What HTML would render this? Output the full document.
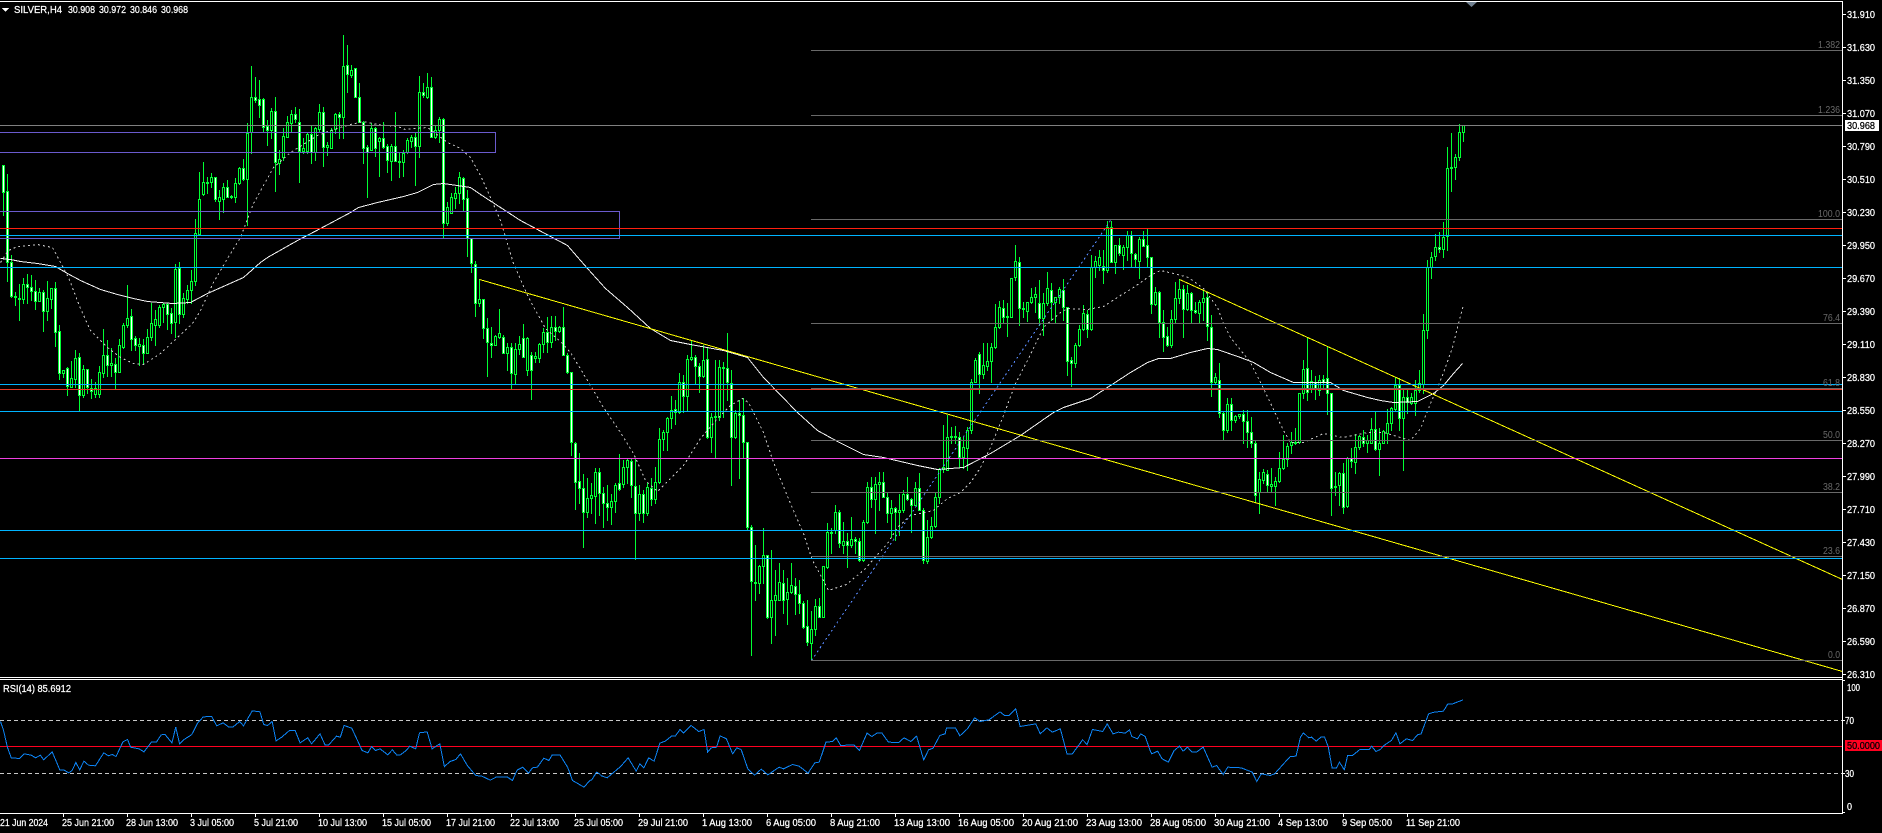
<!DOCTYPE html>
<html><head><meta charset="utf-8"><title>SILVER,H4</title>
<style>
html,body{margin:0;padding:0;background:#000;width:1882px;height:833px;overflow:hidden}
svg{display:block;position:absolute;left:0;top:0}
text{font-family:"Liberation Sans",sans-serif;font-size:10px;fill:#fff;stroke:#fff;stroke-width:.25}
.f{fill:#696969;stroke:none}
.k{fill:#000;stroke:#000}
</style></head><body>
<svg id="c" width="1882" height="833" viewBox="0 0 1882 833" xmlns="http://www.w3.org/2000/svg">
<rect width="1882" height="833" fill="#000"/>
<g id="candles" shape-rendering="crispEdges"></g>
<g shape-rendering="crispEdges" fill="none" stroke-width="1">
<g transform="translate(.5 .5)">
<!-- slow MA -->
<polyline stroke="#f4f4f4" points="0,258 10,259 20,261 37,263 55,266 67,273 80,280 100,289 117,294 133,298 147,301 172,303 190,302 207,293 243,277 260,262 267,257 297,240 320,228 350,212 358,207 377,202 403,196 417,192 433,184 443,183 470,187 480,194 500,207 520,220 567,245 587,268 605,288 627,307 650,328 670,340 690,344 723,350 747,357 763,377 797,412 817,430 837,441 863,454 883,457 917,465 937,469 963,467 990,453 1020,435 1053,412 1063,407 1090,398 1110,385 1130,372 1147,362 1158,358 1170,358 1190,352 1207,348 1217,349 1240,357 1253,362 1270,372 1293,382 1330,382 1343,390 1367,397 1380,400 1393,402 1417,401 1433,393 1443,385 1453,373 1462,363"/>
<!-- fast MA -->
<polyline stroke="#c8c8c8" stroke-dasharray="2 3" points="0,262 8,250 17,246 37,244 52,247 60,262 68,277 80,308 90,330 107,347 120,357 133,363 143,364 160,353 177,337 192,323 200,310 213,282 227,258 240,237 253,203 273,167 290,152 317,135 333,129 350,124 363,121 377,124 397,126 405,129 427,127 447,142 460,148 470,157 480,175 490,197 500,220 513,263 528,297 545,328 560,341 570,352 587,380 603,407 620,432 633,453 645,480 657,491 670,478 683,465 700,438 717,418 730,405 742,398 748,402 763,432 773,462 790,503 803,533 812,560 823,580 828,590 846,584 853,578 863,570 887,543 897,527 910,515 933,510 947,498 960,492 970,482 980,467 990,447 1003,415 1015,383 1027,360 1043,327 1060,312 1067,308 1087,309 1103,306 1120,295 1133,287 1150,275 1160,270 1173,273 1188,277 1203,288 1217,307 1223,323 1230,337 1250,362 1263,388 1283,430 1290,442 1303,442 1323,433 1342,437 1367,432 1383,432 1403,438 1410,440 1420,428 1430,403 1438,385 1443,372 1452,347 1458,323 1463,304"/>
<!-- trend -->
<line x1="479" y1="279" x2="1842" y2="671" stroke="#ffff00"/>
<line x1="1179" y1="279" x2="1842" y2="579" stroke="#ffff00"/>
<line x1="811" y1="660" x2="1110" y2="220" stroke="#5a8cff" stroke-dasharray="2 3"/>
</g>
<!-- rects -->
<path d="M0 132.5H495.5V152.5H0" stroke="#6a5acd"/>
<path d="M0 211.5H619.5V238.5H0" stroke="#6a5acd"/>
<!-- price line -->
<line x1="0" y1="125.5" x2="1842" y2="125.5" stroke="#808080"/>
<!-- fib -->
<g stroke="#696969">
<line x1="811" y1="50.5" x2="1842" y2="50.5"/>
<line x1="811" y1="115.5" x2="1842" y2="115.5"/>
<line x1="811" y1="219.5" x2="1842" y2="219.5"/>
<line x1="811" y1="323.5" x2="1842" y2="323.5"/>
<line x1="811" y1="388.5" x2="1842" y2="388.5"/>
<line x1="811" y1="440.5" x2="1842" y2="440.5"/>
<line x1="811" y1="492.5" x2="1842" y2="492.5"/>
<line x1="811" y1="556.5" x2="1842" y2="556.5"/>
<line x1="811" y1="660.5" x2="1842" y2="660.5"/>
</g>
<!-- horizontals -->
<g stroke="#00b4ff">
<line x1="0" y1="235.5" x2="1842" y2="235.5"/>
<line x1="0" y1="267.5" x2="1842" y2="267.5"/>
<line x1="0" y1="384.5" x2="1842" y2="384.5"/>
<line x1="0" y1="411.5" x2="1842" y2="411.5"/>
<line x1="0" y1="530.5" x2="1842" y2="530.5"/>
<line x1="0" y1="558.5" x2="1842" y2="558.5"/>
</g>
<line x1="0" y1="228.5" x2="1842" y2="228.5" stroke="#ff2010"/>
<line x1="0" y1="389.5" x2="1842" y2="389.5" stroke="#e03a28"/>
<line x1="0" y1="458.5" x2="1842" y2="458.5" stroke="#f040e0"/>
<!-- RSI levels -->
<line x1="0" y1="720.5" x2="1842" y2="720.5" stroke="#c8c8c8" stroke-dasharray="4 3"/>
<line x1="0" y1="773.5" x2="1842" y2="773.5" stroke="#c8c8c8" stroke-dasharray="4 3"/>
<line x1="0" y1="746.5" x2="1842" y2="746.5" stroke="#ff0020"/>
<!-- RSI -->
<g stroke="#0d84f5">
<polyline vector-effect="non-scaling-stroke" transform="translate(.5 550.5) scale(.38265 .33333)" points="0,513 8,540 18,590 28,622 50,624 62,610 80,614 92,622 104,614 113,628 135,604 155,658 165,658 178,667 187,660 197,636 207,658 218,632 230,644 248,646 270,607 282,616 292,612 302,618 320,574 332,567 340,590 362,595 375,604 395,574 408,574 420,553 430,552 448,577 458,530 468,580 480,567 500,552 515,518 530,499 552,498 565,526 582,517 597,530 607,530 625,513 635,526 658,481 678,484 688,522 698,525 710,513 720,571 735,560 755,540 770,540 783,577 803,562 813,580 835,550 848,583 858,583 878,557 888,560 898,525 918,533 945,600 960,607 970,588 980,600 992,595 1012,613 1024,598 1035,613 1045,613 1060,600 1070,587 1085,595 1095,547 1115,544 1128,595 1148,580 1160,648 1175,633 1190,627 1202,610 1220,645 1242,675 1258,677 1280,689 1295,680 1310,680 1325,680 1338,690 1350,659 1365,650 1380,668 1390,652 1403,650 1420,623 1433,630 1442,613 1462,613 1482,650 1495,690 1525,710 1540,690 1545,688 1558,665 1568,672"/>
<polyline vector-effect="non-scaling-stroke" transform="translate(600.5 550.5) scale(.44643 .33333)" points="0,675 15,682 30,665 45,648 62,622 80,662 88,640 97,652 108,622 120,632 133,578 145,572 160,556 168,556 178,537 186,548 203,525 220,543 232,537 240,605 248,592 260,590 268,556 282,565 296,610 305,592 315,597 330,655 345,674 360,656 375,673 400,650 410,655 430,642 445,647 465,668 480,637 490,635 505,575 520,573 528,562 538,585 568,583 580,600 597,548 608,558 620,547 630,547 645,575 668,576 680,562 695,573 708,557 724,628 735,598 745,593 760,555 772,550 775,532 795,532 805,556 822,535 838,502 850,513 870,508 895,484 905,495 915,495 930,475 940,528 975,520 985,550 1000,532 1012,545 1030,535 1045,610 1057,610 1080,568 1090,582 1102,537 1125,543 1135,520 1148,550 1160,545 1175,548 1185,538 1190,558 1203,565 1210,550 1220,558 1232,603 1235,610 1248,602 1258,625 1272,635 1285,600 1297,587 1305,602 1315,590 1325,605 1335,605 1350,590 1370,650 1380,645 1395,672 1405,650 1435,652 1460,665 1470,693 1480,670 1500,675 1510,670 1530,640 1545,618 1558,617 1568,560"/>
<polyline vector-effect="non-scaling-stroke" transform="translate(1300.5 540.5) scale(.3712 .33333)" points="0,590 8,577 22,592 30,590 42,602 55,590 65,590 75,620 85,682 97,682 105,665 118,688 127,645 140,645 160,627 185,627 192,617 203,633 215,627 225,615 245,600 257,577 268,610 285,595 302,600 315,583 325,580 345,520 360,515 385,512 397,490 410,490 438,478"/>
</g>
<!-- frame -->
<g stroke="#fff">
<line x1="0" y1="1.5" x2="1843" y2="1.5"/>
<line x1="1842.5" y1="1" x2="1842.5" y2="814"/>
<line x1="0" y1="677.5" x2="1843" y2="677.5"/>
<line x1="0" y1="679.5" x2="1843" y2="679.5"/>
<line x1="0" y1="813.5" x2="1843" y2="813.5"/>
<path d="M1843 14.5h3M1843 47.5h3M1843 80.5h3M1843 113.5h3M1843 146.5h3M1843 179.5h3M1843 212.5h3M1843 245.5h3M1843 278.5h3M1843 311.5h3M1843 344.5h3M1843 377.5h3M1843 410.5h3M1843 443.5h3M1843 476.5h3M1843 509.5h3M1843 542.5h3M1843 575.5h3M1843 608.5h3M1843 641.5h3M1843 674.5h3"/>
<path d="M1843 680.5h2M1843 720.5h2M1843 773.5h2M1843 812.5h2"/>
<path d="M63.500 814v3M127.500 814v3M191.500 814v3M255.500 814v3M319.500 814v3M383.500 814v3M447.500 814v3M511.500 814v3M575.500 814v3M639.500 814v3M703.500 814v3M767.500 814v3M831.500 814v3M895.500 814v3M959.500 814v3M1023.500 814v3M1087.500 814v3M1151.500 814v3M1215.500 814v3M1279.500 814v3M1343.500 814v3M1407.500 814v3"/>
</g>
<rect x="1845" y="120" width="34" height="11" fill="#fff" stroke="none"/>
<rect x="1845" y="740" width="37" height="11" fill="#ff0020" stroke="none"/>
</g>
<path d="M2 8h7l-3.500 4z" fill="#fff" shape-rendering="crispEdges"/>
<path d="M1466 2h11l-5.500 5z" fill="#708090"/>
<!-- header -->
<text x="14" y="13" textLength="48" lengthAdjust="spacingAndGlyphs">SILVER,H4</text>
<text x="68" y="13" textLength="27" lengthAdjust="spacingAndGlyphs">30.908</text>
<text x="99" y="13" textLength="27" lengthAdjust="spacingAndGlyphs">30.972</text>
<text x="130" y="13" textLength="27" lengthAdjust="spacingAndGlyphs">30.846</text>
<text x="161" y="13" textLength="27" lengthAdjust="spacingAndGlyphs">30.968</text>
<text x="3" y="692" textLength="68" lengthAdjust="spacingAndGlyphs">RSI(14) 85.6912</text>
<!-- fib labels -->
<text class="f" x="1818" y="48" textLength="22" lengthAdjust="spacingAndGlyphs">1.382</text>
<text class="f" x="1818" y="113" textLength="22" lengthAdjust="spacingAndGlyphs">1.236</text>
<text class="f" x="1818" y="217" textLength="22" lengthAdjust="spacingAndGlyphs">100.0</text>
<text class="f" x="1823" y="321" textLength="17" lengthAdjust="spacingAndGlyphs">76.4</text>
<text class="f" x="1823" y="386" textLength="17" lengthAdjust="spacingAndGlyphs">61.8</text>
<text class="f" x="1823" y="438" textLength="17" lengthAdjust="spacingAndGlyphs">50.0</text>
<text class="f" x="1823" y="490" textLength="17" lengthAdjust="spacingAndGlyphs">38.2</text>
<text class="f" x="1823" y="554" textLength="17" lengthAdjust="spacingAndGlyphs">23.6</text>
<text class="f" x="1828" y="658" textLength="12" lengthAdjust="spacingAndGlyphs">0.0</text>
<!-- price axis -->
<g>
<text x="1847" y="18" textLength="28" lengthAdjust="spacingAndGlyphs">31.910</text>
<text x="1847" y="51" textLength="28" lengthAdjust="spacingAndGlyphs">31.630</text>
<text x="1847" y="84" textLength="28" lengthAdjust="spacingAndGlyphs">31.350</text>
<text x="1847" y="117" textLength="28" lengthAdjust="spacingAndGlyphs">31.070</text>
<text x="1847" y="150" textLength="28" lengthAdjust="spacingAndGlyphs">30.790</text>
<text x="1847" y="183" textLength="28" lengthAdjust="spacingAndGlyphs">30.510</text>
<text x="1847" y="216" textLength="28" lengthAdjust="spacingAndGlyphs">30.230</text>
<text x="1847" y="249" textLength="28" lengthAdjust="spacingAndGlyphs">29.950</text>
<text x="1847" y="282" textLength="28" lengthAdjust="spacingAndGlyphs">29.670</text>
<text x="1847" y="315" textLength="28" lengthAdjust="spacingAndGlyphs">29.390</text>
<text x="1847" y="348" textLength="28" lengthAdjust="spacingAndGlyphs">29.110</text>
<text x="1847" y="381" textLength="28" lengthAdjust="spacingAndGlyphs">28.830</text>
<text x="1847" y="414" textLength="28" lengthAdjust="spacingAndGlyphs">28.550</text>
<text x="1847" y="447" textLength="28" lengthAdjust="spacingAndGlyphs">28.270</text>
<text x="1847" y="480" textLength="28" lengthAdjust="spacingAndGlyphs">27.990</text>
<text x="1847" y="513" textLength="28" lengthAdjust="spacingAndGlyphs">27.710</text>
<text x="1847" y="546" textLength="28" lengthAdjust="spacingAndGlyphs">27.430</text>
<text x="1847" y="579" textLength="28" lengthAdjust="spacingAndGlyphs">27.150</text>
<text x="1847" y="612" textLength="28" lengthAdjust="spacingAndGlyphs">26.870</text>
<text x="1847" y="645" textLength="28" lengthAdjust="spacingAndGlyphs">26.590</text>
<text x="1847" y="678" textLength="28" lengthAdjust="spacingAndGlyphs">26.310</text>
<text class="k" x="1847" y="129" textLength="28" lengthAdjust="spacingAndGlyphs">30.968</text>
<text x="1847" y="691" textLength="13" lengthAdjust="spacingAndGlyphs">100</text>
<text x="1845" y="724" textLength="9" lengthAdjust="spacingAndGlyphs">70</text>
<text x="1845" y="777" textLength="9" lengthAdjust="spacingAndGlyphs">30</text>
<text x="1847" y="810" textLength="5" lengthAdjust="spacingAndGlyphs">0</text>
<text class="k" x="1847" y="749" textLength="33" lengthAdjust="spacingAndGlyphs">50.0000</text>
</g>
<!-- time axis -->
<g>
<text x="0" y="826" textLength="48" lengthAdjust="spacingAndGlyphs">21 Jun 2024</text>
<text x="62" y="826" textLength="52" lengthAdjust="spacingAndGlyphs">25 Jun 21:00</text>
<text x="126" y="826" textLength="52" lengthAdjust="spacingAndGlyphs">28 Jun 13:00</text>
<text x="190" y="826" textLength="44" lengthAdjust="spacingAndGlyphs">3 Jul 05:00</text>
<text x="254" y="826" textLength="44" lengthAdjust="spacingAndGlyphs">5 Jul 21:00</text>
<text x="318" y="826" textLength="49" lengthAdjust="spacingAndGlyphs">10 Jul 13:00</text>
<text x="382" y="826" textLength="49" lengthAdjust="spacingAndGlyphs">15 Jul 05:00</text>
<text x="446" y="826" textLength="49" lengthAdjust="spacingAndGlyphs">17 Jul 21:00</text>
<text x="510" y="826" textLength="49" lengthAdjust="spacingAndGlyphs">22 Jul 13:00</text>
<text x="574" y="826" textLength="49" lengthAdjust="spacingAndGlyphs">25 Jul 05:00</text>
<text x="638" y="826" textLength="50" lengthAdjust="spacingAndGlyphs">29 Jul 21:00</text>
<text x="702" y="826" textLength="50" lengthAdjust="spacingAndGlyphs">1 Aug 13:00</text>
<text x="766" y="826" textLength="50" lengthAdjust="spacingAndGlyphs">6 Aug 05:00</text>
<text x="830" y="826" textLength="50" lengthAdjust="spacingAndGlyphs">8 Aug 21:00</text>
<text x="894" y="826" textLength="56" lengthAdjust="spacingAndGlyphs">13 Aug 13:00</text>
<text x="958" y="826" textLength="56" lengthAdjust="spacingAndGlyphs">16 Aug 05:00</text>
<text x="1022" y="826" textLength="56" lengthAdjust="spacingAndGlyphs">20 Aug 21:00</text>
<text x="1086" y="826" textLength="56" lengthAdjust="spacingAndGlyphs">23 Aug 13:00</text>
<text x="1150" y="826" textLength="56" lengthAdjust="spacingAndGlyphs">28 Aug 05:00</text>
<text x="1214" y="826" textLength="56" lengthAdjust="spacingAndGlyphs">30 Aug 21:00</text>
<text x="1278" y="826" textLength="50" lengthAdjust="spacingAndGlyphs">4 Sep 13:00</text>
<text x="1342" y="826" textLength="50" lengthAdjust="spacingAndGlyphs">9 Sep 05:00</text>
<text x="1406" y="826" textLength="54" lengthAdjust="spacingAndGlyphs">11 Sep 21:00</text>
</g>
</svg>
<script>
var D="165,192,165,215;191,262,174,281;262,296,255,297;296,297,292,305;298,299,284,320;284,299,278,303;284,287,274,303;287,291,275,300;291,301,280,309;292,301,288,301;292,311,290,331;298,311,281,320;288,299,288,308;288,332,282,346;331,373,325,379;370,373,370,377;368,386,367,395;378,387,361,387;358,379,350,387;357,395,353,411;369,395,365,397;369,387,369,393;388,391,379,398;388,394,382,397;372,394,366,397;355,373,329,377;355,365,340,376;363,365,348,376;364,372,358,388;345,372,339,372;325,347,323,348;318,325,285,327;316,339,309,350;338,345,336,350;344,346,338,365;345,353,339,364;337,353,329,353;323,337,303,340;319,325,310,345;307,325,305,327;304,307,303,322;304,314,303,329;313,323,308,333;269,322,264,337;268,314,262,323;298,314,293,317;290,299,285,303;281,290,270,303;233,281,219,285;199,234,172,235;"
+"182,194,162,195;182,183,177,193;177,182,173,187;177,199,177,201;197,201,190,219;187,199,183,212;187,197,180,197;196,197,195,198;183,197,178,202;168,183,167,184;168,179,159,180;133,179,123,225;97,132,66,153;97,100,77,102;99,105,80,117;99,127,98,132;126,130,120,145;111,130,108,138;111,162,97,191;159,163,150,174;136,157,128,160;122,137,116,137;114,123,110,132;114,119,107,122;122,151,109,182;148,151,138,153;134,151,133,153;134,152,126,163;128,152,127,160;112,129,104,132;112,147,107,166;145,147,142,155;130,148,128,148;114,129,113,133;114,117,112,138;66,117,35,138;65,74,45,92;70,75,65,77;68,97,68,97;97,122,83,122;122,148,121,163;147,152,145,197;128,150,123,150;128,148,127,156;138,141,137,176;138,147,122,148;146,160,144,172;146,161,144,180;146,161,112,161;161,162,153,177;153,162,150,176;140,152,138,153;137,141,135,147;137,146,133,185;92,146,76,157;92,95,83,97;87,97,73,98;87,137,77,137;130,137,125,138;119,130,117,142;119,223,118,237;207,223,202,225;197,213,193,213;193,198,187,208;177,193,172,203;178,199,177,210;198,238,190,256;"
+"238,263,238,272;264,303,261,316;299,303,279,306;299,328,299,338;328,342,318,376;343,345,327,357;336,345,335,345;333,337,309,338;337,353,335,353;347,353,343,370;347,373,343,389;349,374,343,383;344,349,336,354;338,357,324,357;338,370,337,375;355,370,352,399;356,358,352,362;344,358,343,362;332,344,328,352;332,342,317,352;327,342,316,347;327,331,316,340;327,331,326,332;327,355,307,355;355,372,353,373;372,442,372,455;443,482,442,509;481,488,453,503;488,512,474,547;498,512,478,517;495,498,483,513;472,496,468,523;472,493,468,515;493,503,487,527;503,507,485,520;501,507,494,524;485,501,483,512;483,489,454,490;467,484,460,487;460,467,458,483;461,485,458,497;486,513,458,559;494,513,485,520;494,513,490,522;487,513,483,515;488,499,478,505;482,499,467,503;439,482,428,483;432,439,430,450;418,432,417,450;410,418,396,428;409,412,400,424;382,412,373,413;382,396,375,412;359,396,355,410;357,359,341,360;357,366,355,383;366,376,363,392;360,376,345,377;359,437,347,438;417,437,413,452;416,417,360,458;367,417,360,420;367,368,362,417;368,382,333,400;383,437,370,485;413,437,410,438;413,415,400,478;415,442,398,458;442,527,442,529;"
+"527,581,525,655;582,583,545,600;566,583,565,593;555,566,528,583;555,617,555,618;600,617,550,643;595,600,570,635;582,600,563,600;583,600,570,613;592,599,578,624;585,592,563,593;586,594,578,614;594,603,580,613;603,627,601,628;626,642,600,645;629,643,611,660;606,629,599,635;606,617,598,617;566,617,566,617;532,567,523,568;532,533,528,553;512,530,505,533;512,543,510,547;541,545,522,553;541,545,533,567;539,545,517,547;539,541,537,553;541,560,538,561;522,560,520,561;487,522,482,523;487,499,477,507;484,499,477,533;482,484,472,510;482,497,472,497;497,513,493,522;508,513,500,537;508,512,507,540;510,512,494,535;494,510,490,512;494,499,477,500;499,505,498,532;488,505,482,505;488,510,473,510;510,560,508,563;537,561,520,563;526,537,517,538;497,526,492,527;469,497,468,503;"
+"467,469,425,472;437,470,415,470;436,437,427,443;436,437,426,443;437,457,432,467;447,457,437,468;430,448,427,470;382,430,379,433;360,382,358,382;354,374,352,393;365,374,343,378;361,366,343,370;347,361,343,382;327,347,304,348;307,327,301,328;308,317,300,322;316,317,303,336;278,317,278,317;261,277,245,280;262,308,257,325;308,309,302,317;302,311,302,321;297,302,288,303;294,297,287,312;303,318,280,325;303,318,293,335;288,303,272,305;290,302,283,320;297,302,297,322;289,297,287,303;290,307,279,320;307,361,307,375;360,363,357,386;345,363,343,367;329,345,325,346;313,329,305,330;314,329,310,337;267,329,255,330;261,267,256,277;257,265,250,270;266,270,250,283;227,270,221,272;227,262,221,262;245,262,245,273;245,253,238,255;247,255,245,269;235,247,231,260;235,253,231,267;254,259,253,267;239,261,237,278;239,246,231,246;245,257,229,267;257,304,257,313;292,304,287,305;292,322,291,337;322,337,310,351;336,345,327,346;319,345,310,347;298,319,282,323;289,298,279,303;289,309,285,337;293,309,285,310;293,310,292,322;310,312,302,313;302,313,300,322;298,302,290,320;297,326,292,340;327,382,315,396;377,382,373,383;380,413,363,417;413,430,412,440;404,430,398,432;404,420,398,430;416,420,415,422;414,416,414,418;"
+"414,421,410,443;421,432,410,447;432,443,417,447;443,495,440,502;479,492,472,513;472,480,469,483;474,485,470,492;484,486,468,492;481,486,477,505;468,481,452,482;459,468,435,469;446,459,443,466;442,445,432,453;442,443,428,444;393,442,393,443;369,393,360,398;368,392,337,400;381,389,370,392;382,388,376,399;380,390,375,395;379,382,375,388;378,393,347,414;393,488,393,515;486,487,472,495;473,485,472,505;473,507,463,513;458,506,457,507;458,461,448,467;447,462,434,473;436,447,435,449;437,443,430,446;440,443,435,452;429,443,418,443;429,449,412,450;443,449,428,475;431,443,430,443;423,433,409,443;408,423,407,430;385,409,377,410;385,418,378,430;397,418,388,470;397,402,388,413;397,403,393,404;390,403,380,415;383,390,370,392;330,384,314,393;267,330,260,338;257,267,252,278;247,256,234,260;247,249,232,252;237,249,222,257;168,236,147,250;167,168,133,191;157,167,154,179;132,157,124,160;125,132,125,141";
var g="",w="",b="",pc=165,a=D.split(";");
for(var i=0;i<a.length;i++){
 var v=a[i].split(",").map(Number),t=v[0],e=v[1],h=Math.min(v[2],t),l=Math.max(v[3],e),x=3+4*i;
 g+="M"+x+" "+h+"h1V"+(l+1)+"h-1z";
 g+="M"+(x-1)+" "+t+"h3V"+(e+1)+"h-3z";
 var bear=Math.abs(t-pc)<Math.abs(e-pc);
 pc=bear?e:t;
 if(e-t>1){var s="M"+x+" "+(t+1)+"h1V"+e+"h-1z";if(bear)w+=s;else b+=s;}
}
document.getElementById("candles").innerHTML='<path fill="#00ff33" d="'+g+'"/><path fill="#000" d="'+b+'"/><path fill="#fff" d="'+w+'"/>';
</script>
</body></html>
